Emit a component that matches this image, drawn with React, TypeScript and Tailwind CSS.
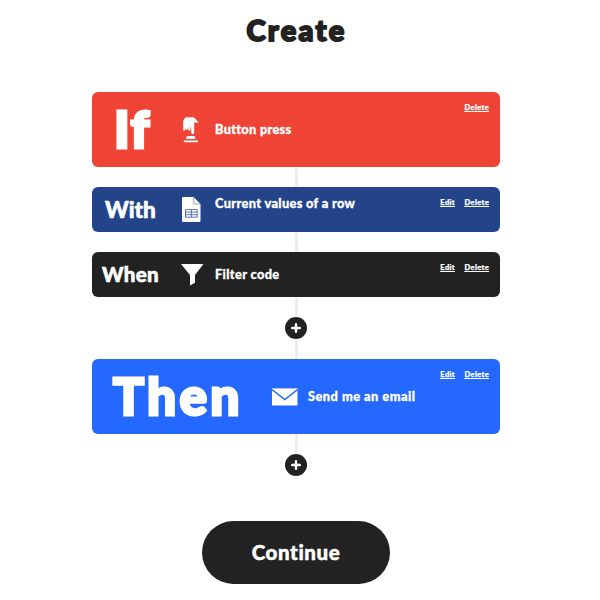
import React from "react";

function Actions({ edit = true }: { edit?: boolean }) {
  return (
    <div className="mt-[11px] mr-[11px] ml-auto flex gap-[9.5px] self-start text-[7.5px] leading-[10px] font-black tracking-[0.35px] underline underline-offset-1 [-webkit-text-stroke:0.25px_white]">
      {edit && <a href="#edit">Edit</a>}
      <a href="#delete">Delete</a>
    </div>
  );
}

function Connector({ className }: { className: string }) {
  return <div className={`w-[3px] bg-[#efedef] ${className}`} />;
}

function AddButton() {
  return (
    <button aria-label="Add" className="flex size-[22px] items-center justify-center rounded-full bg-[#222222]">
      <svg width="10" height="10" viewBox="0 0 10 10" stroke="white" strokeWidth="2.4" strokeLinecap="round">
        <path d="M5 1.2V8.8M1.2 5H8.8" />
      </svg>
    </button>
  );
}

function PressIcon() {
  return (
    <svg width="16" height="26" viewBox="0 0 16 26" fill="white" className="ml-[1.5px]">
      <path d="M1.8 1.2Q2.2 .2 3.5 .2H9.6Q10.7 .2 11.5 1L15.2 4.8Q15.5 6 14.2 6L11.2 5.2V15.8Q11.1 17.2 9.7 17.2Q8.3 17.2 8.2 15.8V10.4H7.5V12.5Q7.3 13.7 6.4 13.7Q5.5 13.7 5.3 12.5V10.4H4.7V12.1Q4.5 13.1 3.8 13.1Q3 13.1 2.8 12.1V11Q1.9 14 1.1 14Q.2 13.8.2 12.5V4.5Q.4 2.5 1.8 1.2Z" />
      <path d="M4 19H11.5L12.6 22H2.8ZM.8 23.6H15V25.2H.8Z" />
    </svg>
  );
}

function SheetIcon() {
  return (
    <svg width="19" height="25" viewBox="0 0 19 25">
      <path d="M1.2 0H11.5L18.5 7V23.7Q18.5 25 17.2 25H1.4Q0 25 0 23.7V1.3Q0 0 1.2 0Z" fill="white" />
      <path d="M11.7 .8V7H18" fill="none" stroke="#8493bd" strokeWidth=".8" />
      <path d="M3.5 12.6H15.2V20.2H3.5ZM3.5 15.1H15.2M3.5 17.7H15.2M9.3 12.6V20.2" fill="none" stroke="#4c659e" strokeWidth=".9" />
    </svg>
  );
}

function FilterIcon() {
  return (
    <svg width="23" height="22" viewBox="0 0 23 22" fill="white">
      <path d="M0 0H22.5L14 11V18.8L9 21.5V11Z" />
    </svg>
  );
}

function MailIcon() {
  return (
    <svg width="26" height="18" viewBox="0 0 26 18">
      <path d="M0 .4H25.5V17.5H0Z" fill="white" />
      <path d="M0 1.6L12.8 11.6L25.5 1.6" fill="none" stroke="#2468ff" strokeWidth="1.4" />
    </svg>
  );
}

function Title({ children, className }: { children: string; className: string }) {
  return <h2 className={`text-[12.8px] font-black [-webkit-text-stroke:0.3px_white] ${className}`}>{children}</h2>;
}

export default function App() {
  return (
    <main className="flex h-[600px] w-[600px] flex-col items-center overflow-hidden bg-white pr-2 font-['Lato',sans-serif] text-white [font-variant-ligatures:none]">
      <h1 className="mt-[15px] h-[77px] pl-[1px] text-[29px] leading-[30px] font-black tracking-[2.3px] text-[#222222] [-webkit-text-stroke:1.9px_#222222]">Create</h1>

      <section className="flex h-[75px] w-[408px] items-center rounded-[6px] bg-[#ef4435]">
        <div className="w-[89px] pb-[3px] pl-[22px] text-[52px] leading-[72px] font-black tracking-[1.5px] [-webkit-text-stroke:3px_white]">If</div>
        <div className="w-[34px]"><PressIcon /></div>
        <Title className="tracking-[0.28px]">Button press</Title>
        <Actions edit={false} />
      </section>
      <Connector className="mt-[1px] h-[19px]" />
      <section className="flex h-[45px] w-[408px] items-center rounded-[6px] bg-[#234489]">
        <div className="w-[90px] pl-[13px] text-[22.5px] font-black [-webkit-text-stroke:0.6px_white]">With</div>
        <div className="w-[33px]"><SheetIcon /></div>
        <Title className="mb-[11px] tracking-[0.34px]">Current values of a row</Title>
        <Actions />
      </section>
      <Connector className="mt-[1px] h-[19px]" />
      <section className="flex h-[45px] w-[408px] items-center rounded-[6px] bg-[#222222]">
        <div className="w-[89px] pl-[10px] text-[20.5px] font-black tracking-[0.3px] [-webkit-text-stroke:0.6px_white]">When</div>
        <div className="w-[34px]"><FilterIcon /></div>
        <Title className="tracking-[0.35px]">Filter code</Title>
        <Actions />
      </section>
      <Connector className="mt-[1px] h-[18px]" />
      <div className="my-[1px] flex"><AddButton /></div>
      <Connector className="h-[19px]" />
      <section className="flex h-[75px] w-[408px] items-center rounded-[6px] bg-[#2468ff]">
        <div className="w-[180px] pb-[2px] pl-[21px] text-[51.5px] leading-[73px] font-black tracking-[3.3px] [-webkit-text-stroke:2.8px_white]">Then</div>
        <div className="w-[36px]"><MailIcon /></div>
        <Title className="tracking-[0.48px]">Send me an email</Title>
        <Actions />
      </section>
      <Connector className="h-[19px]" />
      <div className="mt-[1px] flex"><AddButton /></div>
      <button className="mt-[45px] flex h-[63px] w-[188px] items-center justify-center rounded-full bg-[#222222] text-[20.5px] font-black tracking-[0.6px] [-webkit-text-stroke:0.5px_white]">Continue</button>
    </main>
  );
}
